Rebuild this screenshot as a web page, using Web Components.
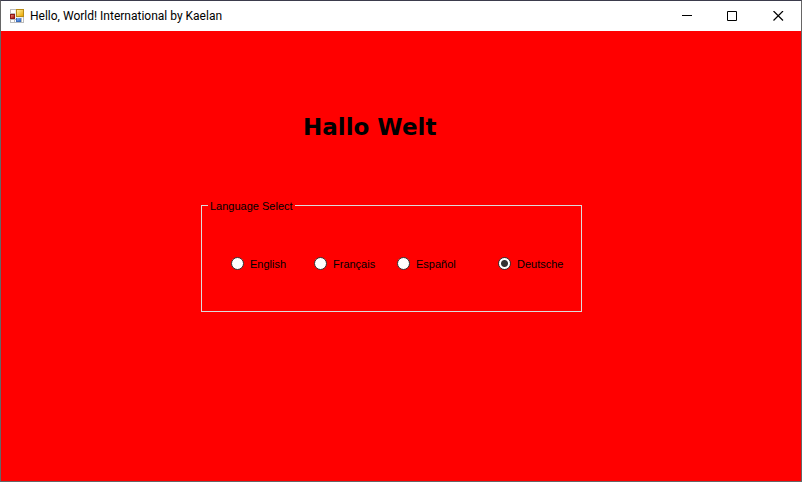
<!DOCTYPE html>
<html lang="en">
<head>
<meta charset="utf-8">
<title>Hello, World! International by Kaelan</title>
<style>
html, body { height: 100%; margin: 0; }
body { font: 11px/14px "Liberation Sans", Arial, sans-serif; color: #000; background: #f00; }
</style>
</head>
<body>
<app-window>
  <title-bar slot="bar">Hello, World! International by Kaelan</title-bar>
  <greeting-text>Hallo Welt</greeting-text>
  <language-select></language-select>
</app-window>

<template id="app-window">
  <style>
    :host { display: flex; flex-direction: column; box-sizing: border-box; min-height: 100vh; border: 1px solid #666; border-top-color: #3b3b4c; background: #f00; }
    main { flex: 1; display: grid; grid-template-columns: 200fr 381fr 219fr; align-content: start; row-gap: 56px; padding-top: 82px; }
    ::slotted(:not([slot])) { grid-column: 2; }
  </style>
  <slot name="bar"></slot>
  <main><slot></slot></main>
</template>

<template id="title-bar">
  <style>
    :host { display: block; }
    header { display: flex; align-items: center; height: 30px; background: #fff; padding-left: 9px; }
    .icon { flex: none; width: 14px; height: 14px; }
    h1 { flex: 1; margin: 0 0 0 6px; font: 12px/16px Roboto, "Noto Sans", sans-serif; white-space: nowrap; }
    button { display: flex; align-items: center; justify-content: center; width: 46px; height: 30px; padding: 0; border: 0; background: none; color: #000; }
    button svg { width: 11px; height: 11px; }
  </style>
  <header>
    <svg class="icon" viewBox="0 0 14 14" aria-hidden="true">
      <defs>
        <linearGradient id="y" x2="1" y2="1"><stop stop-color="#fff0a0"/><stop offset="1" stop-color="#eaa800"/></linearGradient>
        <linearGradient id="r" x2="1" y2="1"><stop stop-color="#e98a78"/><stop offset="1" stop-color="#a80f08"/></linearGradient>
        <linearGradient id="b" x2="1" y2="1"><stop stop-color="#8ab8f5"/><stop offset="1" stop-color="#2d68cc"/></linearGradient>
      </defs>
      <path fill="#bcbcbc" d="M0 0h14v14H0z"/>
      <path fill="#fff" d="M1 1h4v3H1zM1 11h3v2H1zM5 11h1v2H5zM12 9h1v4h-1z"/>
      <path fill="#b98b16" d="M6 0h8v8H6z"/><path fill="url(#y)" d="M7 1h6v6H7z"/>
      <path fill="#8f1717" d="M0 5h5v5H0z"/><path fill="url(#r)" d="M1 6h3v3H1z"/>
      <path fill="#3c6dbb" d="M6 9h5v4H6z"/><path fill="url(#b)" d="M7 9h4v3H7z"/>
      <path fill="#eee" d="M5 1h1v9H5zM6 8h7v1H6z"/>
    </svg>
    <h1><slot></slot></h1>
    <button aria-label="Minimize"><svg viewBox="0 0 11 11"><path d="M1 4.5h10" stroke="currentColor"/></svg></button>
    <button aria-label="Maximize"><svg viewBox="0 0 11 11"><path d="M.5.5h9v9h-9z" fill="none" stroke="currentColor"/></svg></button>
    <button aria-label="Close"><svg viewBox="0 0 11 11"><path d="M.5 0L10 9.500M10 0L.5 9.500" stroke="currentColor" stroke-width="1.2"/></svg></button>
  </header>
</template>

<template id="greeting-text">
  <style>
    :host { display: block; padding-left: 102px; }
    h2 { margin: 0; font: bold 23px/28px "DejaVu Sans", sans-serif; white-space: nowrap; }
  </style>
  <h2><slot></slot></h2>
</template>

<template id="language-select">
  <style>
    :host { display: block; }
    fieldset { min-width: 0; margin: 0; padding: 0 0 40px 29px; border: 1px solid #dcdcdc; }
    legend { margin: 0 0 0 -23px; padding: 2px 2px 0; }
    .options { display: grid; grid-template-columns: 83fr 83fr 101fr 83fr; padding-top: 42px; }
    label { display: flex; align-items: center; gap: 6px; white-space: nowrap; }
    span { padding-top: 2px; }
    input { appearance: none; flex: none; box-sizing: border-box; width: 13px; height: 13px; margin: 0; border: 1px solid #333; border-radius: 50%; background: #fff; }
    input:checked { background: radial-gradient(circle, #333 3px, #fff 4px); }
  </style>
  <fieldset>
    <legend>Language Select</legend>
    <div class="options">
      <label><input type="radio" name="language" value="en"><span>English</span></label>
      <label><input type="radio" name="language" value="fr"><span>Français</span></label>
      <label><input type="radio" name="language" value="es"><span>Español</span></label>
      <label><input type="radio" name="language" value="de" checked><span>Deutsche</span></label>
    </div>
  </fieldset>
</template>

<script>
class TemplateElement extends HTMLElement {
  constructor() {
    super();
    const template = document.getElementById(this.localName);
    this.attachShadow({ mode: "open" }).append(template.content.cloneNode(true));
  }
}
customElements.define("app-window", class extends TemplateElement {});
customElements.define("title-bar", class extends TemplateElement {});
customElements.define("greeting-text", class extends TemplateElement {});
customElements.define("language-select", class extends TemplateElement {
  constructor() {
    super();
    const greetings = { en: "Hello World", fr: "Bonjour le monde", es: "Hola Mundo", de: "Hallo Welt" };
    this.shadowRoot.addEventListener("change", (event) => {
      document.querySelector("greeting-text").textContent = greetings[event.target.value];
    });
  }
});
</script>
</body>
</html>
